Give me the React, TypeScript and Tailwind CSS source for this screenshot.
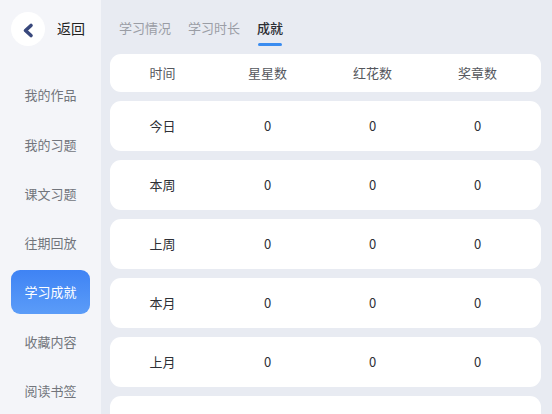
import { useState } from 'react';

const menu = ['我的作品', '我的习题', '课文习题', '往期回放', '学习成就', '收藏内容', '阅读书签'];
const tabs = ['学习情况', '学习时长', '成就'];
const columns = ['时间', '星星数', '红花数', '奖章数'];

const rows = [
  { label: '今日', stars: 0, flowers: 0, medals: 0 },
  { label: '本周', stars: 0, flowers: 0, medals: 0 },
  { label: '上周', stars: 0, flowers: 0, medals: 0 },
  { label: '本月', stars: 0, flowers: 0, medals: 0 },
  { label: '上月', stars: 0, flowers: 0, medals: 0 },
];

const font = { fontFamily: '"Noto Sans CJK SC", "Noto Sans", sans-serif' };

export default function App() {
  const [active, setActive] = useState('学习成就');
  const [tab, setTab] = useState('成就');

  return (
    <div className="flex h-[414px] w-[552px] overflow-hidden bg-[#e8ebf2]" style={font}>
      {/* Sidebar */}
      <aside className="flex w-[101px] shrink-0 flex-col bg-[#f4f5f9]">
        <div className="flex h-[56px] shrink-0 items-center pl-[11px] pt-[1px]">
          <button className="flex h-[34px] w-[34px] items-center justify-center rounded-full bg-white">
            <svg width="34" height="34" viewBox="0 0 34 34" fill="none">
              <path
                d="M20 13.5 L14.5 18.5 L20 23.5"
                stroke="#39487c"
                strokeWidth="3.6"
                strokeLinecap="round"
                strokeLinejoin="round"
              />
            </svg>
          </button>
          <span className="ml-[12px] text-[14px] text-[#222]">返回</span>
        </div>

        <nav className="mt-[17px] flex flex-col gap-[5.3px] px-[11px]">
          {menu.map((item) => (
            <button
              key={item}
              onClick={() => setActive(item)}
              className={
                item === active
                  ? 'h-[44px] shrink-0 rounded-[9px] bg-gradient-to-b from-[#3f83f4] to-[#5b9cf8] text-[13px] text-white'
                  : 'h-[44px] shrink-0 rounded-[9px] text-[13px] text-[#72757c]'
              }
            >
              {item}
            </button>
          ))}
        </nav>
      </aside>

      {/* Main */}
      <main className="flex flex-1 flex-col pl-[9px] pr-[11px]">
        <div className="flex h-[54px] shrink-0 items-start gap-[17px] pl-[9px] pt-[18px]">
          {tabs.map((t) => (
            <button key={t} onClick={() => setTab(t)} className="flex flex-col items-center">
              <span
                className={
                  t === tab
                    ? 'text-[13px] leading-[20px] font-medium text-[#2b2d33]'
                    : 'text-[13px] leading-[20px] text-[#9a9da5]'
                }
              >
                {t}
              </span>
              {t === tab && <span className="mt-[5px] h-[3px] w-[24px] rounded-full bg-[#3a8cf0]" />}
            </button>
          ))}
        </div>

        <div className="flex h-[38px] shrink-0 items-center rounded-[11px] bg-white pr-[11px]">
          {columns.map((c) => (
            <div key={c} className="w-[105px] text-center text-[13px] text-[#55575d]">
              {c}
            </div>
          ))}
        </div>

        <div className="mt-[9px] flex flex-col gap-[9px]">
          {rows.map((r) => (
            <div key={r.label} className="flex h-[50px] shrink-0 items-center rounded-[11px] bg-white pr-[11px] text-[13px] text-[#2e3036]">
              <div className="w-[105px] text-center">{r.label}</div>
              <div className="w-[105px] text-center">{r.stars}</div>
              <div className="w-[105px] text-center">{r.flowers}</div>
              <div className="w-[105px] text-center">{r.medals}</div>
            </div>
          ))}
          <div className="h-[50px] shrink-0 rounded-[11px] bg-white" />
        </div>
      </main>
    </div>
  );
}
